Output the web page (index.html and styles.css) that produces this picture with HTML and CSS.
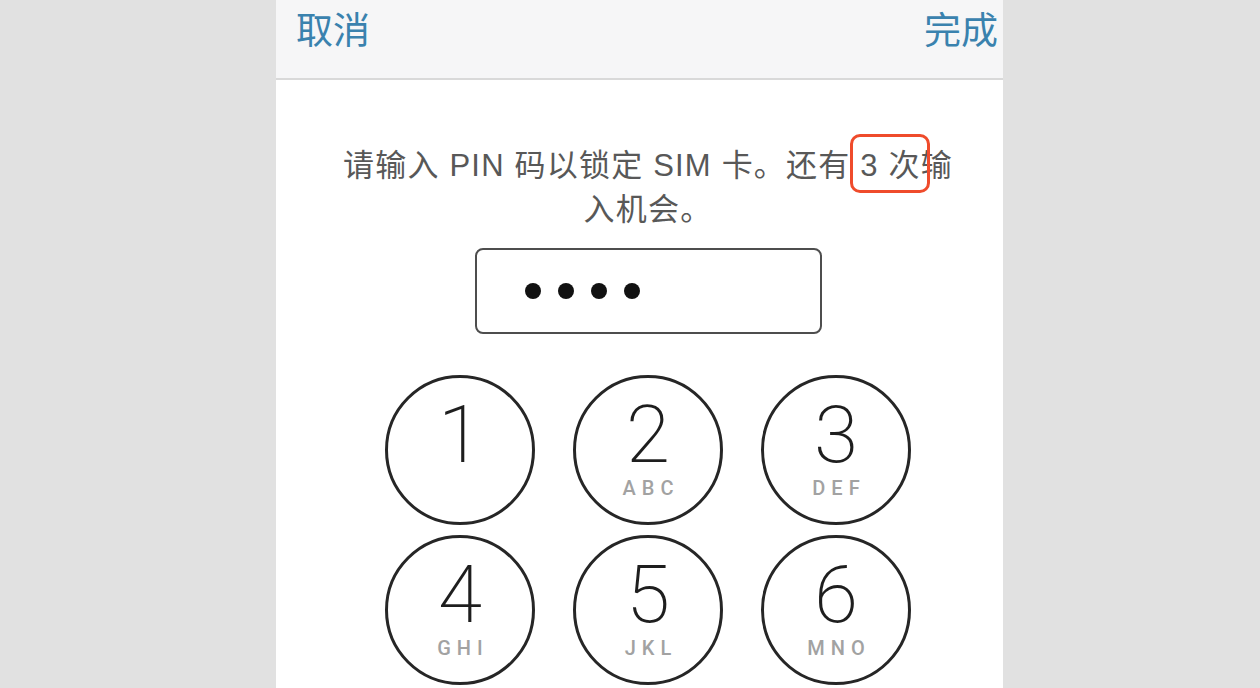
FILE: index.html
```html
<!DOCTYPE html>
<html lang="zh-CN">
<head>
<meta charset="utf-8">
<title>SIM PIN</title>
<link rel="stylesheet" href="styles.css">
</head>
<body>
<div class="phone">
  <header class="navbar">
    <span class="nav-btn">取消</span>
    <span class="nav-btn">完成</span>
  </header>
  <main class="content">
    <p class="message">请输入 PIN 码以锁定 SIM 卡。还有 <span class="mark">3 次</span>输<br>入机会。</p>
    <div class="pin-field">
      <span class="dot"></span><span class="dot"></span><span class="dot"></span><span class="dot"></span>
    </div>
    <div class="keypad">
      <div class="key"><span class="digit">1</span></div>
      <div class="key"><span class="digit">2</span><span class="letters">ABC</span></div>
      <div class="key"><span class="digit">3</span><span class="letters">DEF</span></div>
      <div class="key"><span class="digit">4</span><span class="letters">GHI</span></div>
      <div class="key"><span class="digit">5</span><span class="letters">JKL</span></div>
      <div class="key"><span class="digit">6</span><span class="letters">MNO</span></div>
    </div>
  </main>
</div>
</body>
</html>
```

FILE: styles.css
```css
html, body {
  margin: 0;
  padding: 0;
  height: 100%;
  overflow: hidden;
}
body {
  background: #e1e1e1;
  font-family: "Liberation Sans", "Noto Sans CJK SC", sans-serif;
}
.phone {
  margin-left: 276px;
  width: 727px;
  height: 688px;
  background: #ffffff;
  overflow: hidden;
}
.navbar {
  height: 80px;
  box-sizing: border-box;
  background: #f6f6f7;
  border-bottom: 2px solid #d9d9d9;
  display: flex;
  justify-content: space-between;
  align-items: flex-start;
  padding: 10px 5px 0 20px;
}
.nav-btn {
  font-family: "Noto Sans CJK SC", sans-serif;
  font-size: 37px;
  line-height: 37px;
  color: #3a82ae;
}
.content {
  padding-left: 17px;
  display: flex;
  flex-direction: column;
  align-items: center;
}
.message {
  margin: 64px 0 0 0;
  font-size: 31px;
  line-height: 44px;
  letter-spacing: 1.2px;
  color: #585858;
  text-align: center;
  white-space: nowrap;
}
.mark {
  position: relative;
}
.mark::after {
  content: "";
  position: absolute;
  left: -10px;
  right: -9px;
  top: -14px;
  bottom: -10px;
  border: 3px solid #ef4b2b;
  border-radius: 10px;
}
.pin-field {
  margin-top: 16px;
  width: 347px;
  height: 86px;
  box-sizing: border-box;
  border: 2.5px solid #4e4e4e;
  border-radius: 8px;
  display: flex;
  align-items: center;
  gap: 17px;
  padding-left: 48px;
}
.dot {
  width: 16px;
  height: 16px;
  border-radius: 50%;
  background: #111111;
}
.keypad {
  margin-top: 41px;
  display: grid;
  grid-template-columns: repeat(3, 150px);
  column-gap: 38px;
  row-gap: 10px;
}
.key {
  width: 150px;
  height: 150px;
  box-sizing: border-box;
  border: 3px solid #262626;
  border-radius: 50%;
  display: flex;
  flex-direction: column;
  align-items: center;
  padding-top: 21px;
}
.digit {
  font-family: Roboto, "Liberation Sans", sans-serif;
  font-weight: 200;
  font-size: 80px;
  line-height: 72px;
  color: #1e1e1e;
}
.letters {
  margin-top: 7px;
  font-family: Roboto, "Liberation Sans", sans-serif;
  font-weight: 500;
  font-size: 20px;
  line-height: 20px;
  letter-spacing: 6px;
  margin-right: -6px;
  color: #a2a2a2;
}
```
